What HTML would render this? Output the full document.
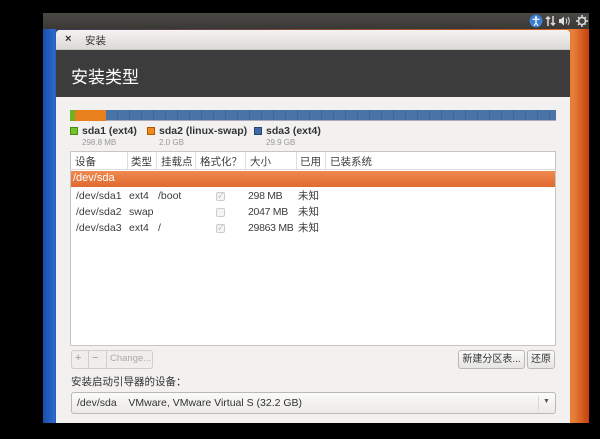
<!DOCTYPE html>
<html><head><meta charset="utf-8"><style>
*{margin:0;padding:0;box-sizing:border-box}
body{width:600px;height:439px;background:#000;position:relative;overflow:hidden;font-family:"Liberation Sans","Noto Sans CJK SC",sans-serif;font-size:10px;color:#3c3c3c}
.a{position:absolute}
</style></head><body>
<div class="a" style="left:43px;top:29px;width:546px;height:394px;background:linear-gradient(90deg,#1a4fa8 0,#2a6ad0 12px,#3a3a5a 14px,#c95a20 500px,#e8803a 530px,#c8400c 546px)"></div>
<div class="a" style="left:43px;top:13px;width:546px;height:16px;background:linear-gradient(#4a4945,#3a3935)"></div>
<svg class="a" style="left:528px;top:13px" width="62" height="16">
<circle cx="8" cy="8" r="6.5" fill="#3a7ed0"/><circle cx="8" cy="4.5" r="1.2" fill="#fff"/><path d="M4.5 6.3h7M8 6.3v3.5M8 9.8l-2 3M8 9.8l2 3" stroke="#fff" stroke-width="1.2" fill="none"/>
<path d="M20 13V4M18 6l2-2 2 2M25 3v9M23 10l2 2 2-2" stroke="#ddd" stroke-width="1.5" fill="none"/>
<path d="M31 6h2l3-2.5v9L33 10h-2z" fill="#ddd"/><path d="M38 5.5q1.5 2.5 0 5M40 4q2.5 4 0 8" stroke="#ddd" fill="none"/>
<circle cx="54" cy="8" r="3.5" stroke="#ddd" stroke-width="1.5" fill="none"/><path d="M54 2v2M54 12v2M48 8h2M58 8h2M50 4l1.4 1.4M57.6 11.6l-1.4-1.4M58 4l-1.4 1.4M50 12l1.4-1.4" stroke="#ddd" stroke-width="1.5"/>
</svg>
<div class="a" style="left:56px;top:30px;width:514px;height:393px;background:#f2f1f0;border-radius:4px 4px 0 0;overflow:hidden">
<div class="a" style="left:0;top:0;width:514px;height:20px;background:linear-gradient(#f4f3f1,#dcdad5);border-bottom:1px solid #c8c6c0"></div>
<div class="a" style="left:9px;top:3px;font-size:11px;font-weight:bold;color:#333">×</div>
<div class="a" style="left:29px;top:3px;font-size:10.5px;color:#333">安装</div>
<div class="a" style="left:0;top:20px;width:514px;height:47px;background:#3c3c3c"></div>
<div class="a" style="left:15px;top:33px;font-size:17px;color:#fff">安装类型</div>
</div>
<div class="a" style="left:70px;top:110px;width:486px;height:11px;background:repeating-linear-gradient(90deg,#4a73a8 0,#4a73a8 11px,#3d6699 11px,#3d6699 12px);border-bottom:1px solid #aab"></div>
<div class="a" style="left:70px;top:110px;width:5px;height:11px;background:#6ab520"></div>
<div class="a" style="left:75px;top:110px;width:31px;height:11px;background:#e8801e"></div>
<div class="a" style="left:70px;top:127px;width:8px;height:8px;background:#73c42a;border:1px solid #4a8a10"></div>
<div class="a" style="left:82px;top:125px;font-weight:bold;font-size:10.5px;color:#333">sda1 (ext4)</div>
<div class="a" style="left:82px;top:138px;font-size:8px;color:#999">298.8 MB</div>
<div class="a" style="left:147px;top:127px;width:8px;height:8px;background:#f08a20;border:1px solid #b05a00"></div>
<div class="a" style="left:159px;top:125px;font-weight:bold;font-size:10.5px;color:#333">sda2 (linux-swap)</div>
<div class="a" style="left:159px;top:138px;font-size:8px;color:#999">2.0 GB</div>
<div class="a" style="left:254px;top:127px;width:8px;height:8px;background:#3d6aa5;border:1px solid #24477a"></div>
<div class="a" style="left:266px;top:125px;font-weight:bold;font-size:10.5px;color:#333">sda3 (ext4)</div>
<div class="a" style="left:266px;top:138px;font-size:8px;color:#999">29.9 GB</div>
<div class="a" style="left:70px;top:151px;width:486px;height:195px;background:#fff;border:1px solid #c8c6c0"></div>
<div class="a" style="left:71px;top:152px;width:484px;height:18px;border-bottom:1px solid #ddd"></div>
<div class="a" style="left:127px;top:152px;width:1px;height:18px;background:#ddd"></div>
<div class="a" style="left:156px;top:152px;width:1px;height:18px;background:#ddd"></div>
<div class="a" style="left:195px;top:152px;width:1px;height:18px;background:#ddd"></div>
<div class="a" style="left:245px;top:152px;width:1px;height:18px;background:#ddd"></div>
<div class="a" style="left:296px;top:152px;width:1px;height:18px;background:#ddd"></div>
<div class="a" style="left:325px;top:152px;width:1px;height:18px;background:#ddd"></div>
<div class="a" style="left:75px;top:154px;font-size:10.5px">设备</div>
<div class="a" style="left:131px;top:154px;font-size:10.5px">类型</div>
<div class="a" style="left:161px;top:154px;font-size:10.5px">挂载点</div>
<div class="a" style="left:200px;top:154px;font-size:10.5px">格式化？</div>
<div class="a" style="left:250px;top:154px;font-size:10.5px">大小</div>
<div class="a" style="left:300px;top:154px;font-size:10.5px">已用</div>
<div class="a" style="left:330px;top:154px;font-size:10.5px">已装系统</div>
<div class="a" style="left:71px;top:171px;width:484px;height:16px;background:linear-gradient(#f08a50,#e06a30)"></div>
<div class="a" style="left:73px;top:172px;color:#fff;font-size:11px">/dev/sda</div>
<div class="a" style="left:76px;top:188px;line-height:16px;font-size:10.5px">/dev/sda1<br>/dev/sda2<br>/dev/sda3</div>
<div class="a" style="left:129px;top:188px;line-height:16px;font-size:10.5px">ext4<br>swap<br>ext4</div>
<div class="a" style="left:158px;top:188px;line-height:16px;font-size:10.5px">/boot<br><br>/</div>
<div class="a" style="left:216px;top:192px;width:9px;height:9px;border:1px solid #ccc;border-radius:2px;background:#f4f4f4;color:#aaa;font-size:7px;line-height:8px;text-align:center">✓</div>
<div class="a" style="left:216px;top:208px;width:9px;height:9px;border:1px solid #ccc;border-radius:2px;background:#f4f4f4"></div>
<div class="a" style="left:216px;top:224px;width:9px;height:9px;border:1px solid #ccc;border-radius:2px;background:#f4f4f4;color:#aaa;font-size:7px;line-height:8px;text-align:center">✓</div>
<div class="a" style="left:248px;top:188px;line-height:16px;letter-spacing:-0.3px;font-size:10.5px">298 MB<br>2047 MB<br>29863 MB</div>
<div class="a" style="left:298px;top:188px;line-height:16px;font-size:10.5px">未知<br>未知<br>未知</div>
<div class="a" style="left:71px;top:350px;width:82px;height:19px;border:1px solid #d0cec8;border-radius:3px;background:#efeeec"></div>
<div class="a" style="left:88px;top:351px;width:1px;height:17px;background:#d0cec8"></div>
<div class="a" style="left:106px;top:351px;width:1px;height:17px;background:#d0cec8"></div>
<div class="a" style="left:75px;top:352px;color:#999;font-size:11px">+</div>
<div class="a" style="left:92px;top:352px;color:#999;font-size:11px">−</div>
<div class="a" style="left:110px;top:353px;color:#aaa;font-size:9.5px">Change...</div>
<div class="a" style="left:458px;top:350px;width:67px;height:19px;border:1px solid #bbb9b3;border-radius:3px;background:linear-gradient(#fafafa,#e6e5e2);text-align:center;line-height:17px;color:#333">新建分区表...</div>
<div class="a" style="left:527px;top:350px;width:28px;height:19px;border:1px solid #bbb9b3;border-radius:3px;background:linear-gradient(#fafafa,#e6e5e2);text-align:center;line-height:17px;color:#333">还原</div>
<div class="a" style="left:71px;top:374px;color:#333;font-size:10.5px">安装启动引导器的设备：</div>
<div class="a" style="left:71px;top:392px;width:485px;height:22px;border:1px solid #bbb9b3;border-radius:3px;background:linear-gradient(#fbfbfa,#eceae7)"></div>
<div class="a" style="left:538px;top:396px;width:1px;height:14px;background:#d8d6d0"></div>
<div class="a" style="left:543px;top:398px;font-size:7px;color:#555">▼</div>
<div class="a" style="left:77px;top:397px;color:#333;white-space:pre;font-size:10.5px">/dev/sda    VMware, VMware Virtual S (32.2 GB)</div>
</body></html>
